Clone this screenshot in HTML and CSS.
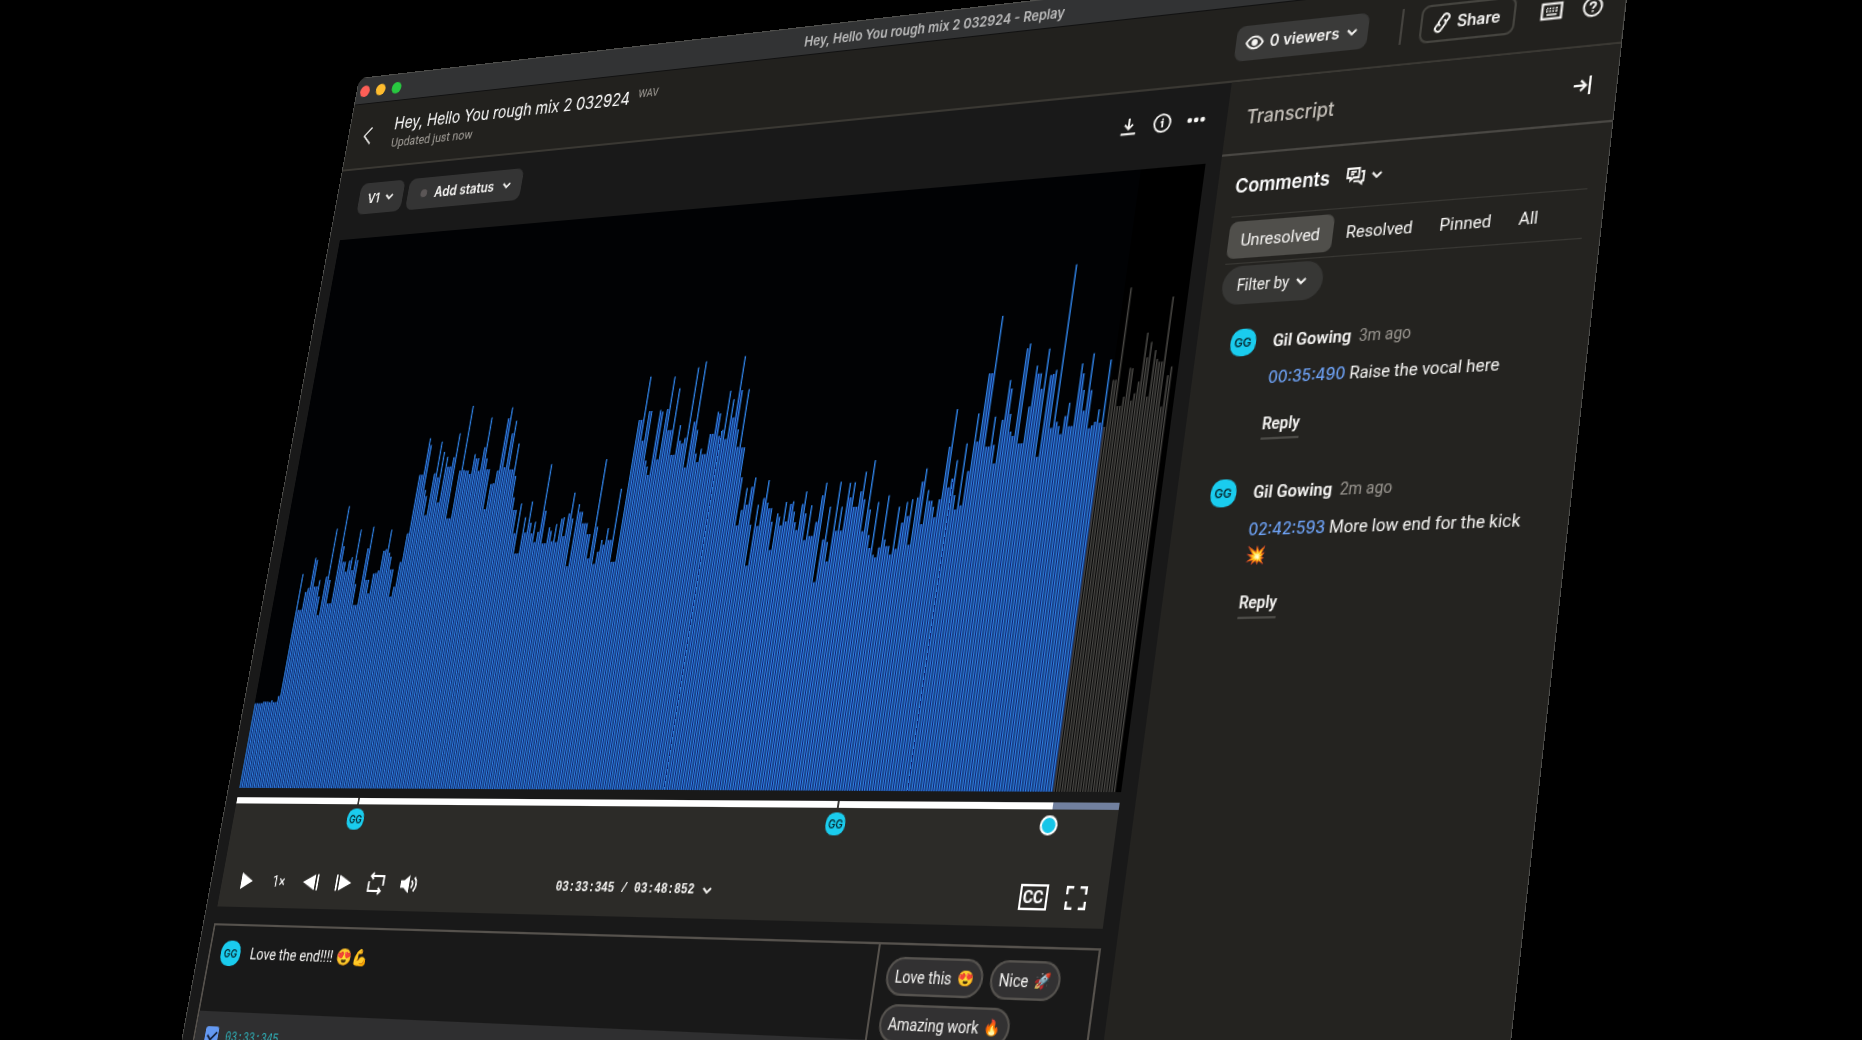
FILE: index.html
```html
<!DOCTYPE html>
<html lang="en">
<head>
<meta charset="utf-8">
<title>Hey, Hello You rough mix 2 032924 - Replay</title>
<link rel="stylesheet" href="styles.css">
</head>
<body>
<svg class="defs" aria-hidden="true">
  <symbol id="chevron" viewBox="0 0 12 12"><path d="M2 4l4 4 4-4" fill="none" stroke="currentColor" stroke-width="1.900"/></symbol>
</svg>
<div class="window">
  <div class="titlebar">
    <div class="lights"><span class="light red"></span><span class="light yellow"></span><span class="light green"></span></div>
    <span class="window-title">Hey, Hello You rough mix 2 032924 - Replay</span>
  </div>

  <header class="header">
    <button class="icon-btn back" aria-label="Back"><svg width="12" height="20" viewBox="0 0 12 20"><path d="M10.500 1.500L2 10l8.500 8.500" fill="none" stroke="currentColor" stroke-width="1.700"/></svg></button>
    <div class="file">
      <div class="file-row"><h1>Hey, Hello You rough mix 2 032924</h1><span class="format">WAV</span></div>
      <p class="updated">Updated just now</p>
    </div>
    <div class="header-actions">
      <button class="pill viewers">
        <svg width="18" height="18" viewBox="0 0 18 18"><path d="M1.200 9C3.200 5.500 5.900 3.700 9 3.700S14.800 5.500 16.800 9C14.800 12.500 12.100 14.300 9 14.300S3.200 12.500 1.200 9z" fill="none" stroke="currentColor" stroke-width="1.800"/><circle cx="9" cy="9" r="2.900" fill="currentColor"/></svg>
        0 viewers
        <svg class="chev"><use href="#chevron"/></svg>
      </button>
      <span class="rule"></span>
      <button class="share">
        <svg width="14" height="20" viewBox="0 0 14 20" fill="none" stroke="currentColor" stroke-width="1.800" stroke-linecap="round"><path d="M4.800 12.200a3 3 0 0 1-.3-4L7.700 3.400a2.900 2.900 0 0 1 4.100-.6 2.900 2.900 0 0 1 .6 4L10.800 9"/><path d="M9.200 7.800a3 3 0 0 1 .3 4l-3.200 4.800a2.900 2.900 0 0 1-4.100.6 2.900 2.900 0 0 1-.6-4L3.200 11"/></svg>
        Share
      </button>
      <button class="icon-btn" aria-label="Keyboard shortcuts"><svg width="20" height="20" viewBox="0 0 20 20"><rect x="1.500" y="3.500" width="17" height="13" fill="none" stroke="currentColor" stroke-width="2"/><path d="M5 7.600h1.500m1.200 0h1.500m1.200 0h1.500m1.200 0H15M5 10h1.500m1.200 0h1.500m1.200 0h1.500m1.200 0H15M5.500 13h9" stroke="currentColor" stroke-width="1.500"/></svg></button>
      <button class="icon-btn" aria-label="Help"><svg width="20" height="20" viewBox="0 0 20 20" fill="none" stroke="currentColor" stroke-width="1.800"><circle cx="10" cy="10" r="7.800"/><path d="M7.700 8.400c0-1.500 1-2.300 2.400-2.300s2.300.8 2.300 2c0 1.700-2.200 1.700-2.200 3.600M10.200 12.900v1.500"/></svg></button>
    </div>
  </header>

  <div class="workspace">
    <main class="main">
      <div class="toolbar">
        <button class="pill version">V1 <svg class="chev"><use href="#chevron"/></svg></button>
        <button class="pill status"><span class="status-dot"></span>Add status <svg class="chev"><use href="#chevron"/></svg></button>
        <div class="file-tools">
          <button class="icon-btn" aria-label="Download"><svg width="20" height="20" viewBox="0 0 20 20" fill="none" stroke="currentColor" stroke-width="1.900"><path d="M10 3v9.500M6 8.700L10 12.700l4-4M2.800 17.300h14.400"/></svg></button>
          <button class="icon-btn" aria-label="Info"><svg width="20" height="20" viewBox="0 0 20 20" fill="none" stroke="currentColor" stroke-width="1.800"><circle cx="10" cy="10" r="7.800"/><path d="M8.500 9h1.700v5M10.200 5.700v1.800"/></svg></button>
          <button class="icon-btn" aria-label="More"><svg width="20" height="20" viewBox="0 0 20 20" fill="currentColor"><circle cx="3.700" cy="10" r="2.300"/><circle cx="10" cy="10" r="2.300"/><circle cx="16.300" cy="10" r="2.300"/></svg></button>
        </div>
      </div>

      <div class="chart">
        <svg class="waveform" viewBox="0 0 957 547" preserveAspectRatio="none" role="img" aria-label="Waveform">
          <path id="glow" class="bars glow"/>
          <path id="played" class="bars played"/>
          <path id="unplayed" class="bars unplayed"/>
        </svg>
      </div>

      <section class="player">
        <div class="seek">
          <span class="tick" style="left:15.5%"></span>
          <span class="tick" style="left:71.1%"></span>
          <span class="avatar marker" style="left:15.5%">GG</span>
          <span class="avatar marker" style="left:71.1%">GG</span>
          <input type="range" min="0" max="228852" value="213345" aria-label="Playback position">
        </div>
        <div class="controls">
          <div class="control-group">
            <button class="icon-btn" aria-label="Play"><svg width="24" height="24" viewBox="0 0 24 24"><path d="M5 4l14 8-14 8z" fill="currentColor"/></svg></button>
            <button class="icon-btn speed">1×</button>
            <button class="icon-btn" aria-label="Step back"><svg width="24" height="24" viewBox="0 0 24 24" fill="currentColor"><path d="M17 4.500v15L2.500 12zM19 4.500h2v15h-2z"/></svg></button>
            <button class="icon-btn" aria-label="Step forward"><svg width="24" height="24" viewBox="0 0 24 24" fill="currentColor"><path d="M7 4.500v15L21.500 12zM3 4.500h2v15H3z"/></svg></button>
            <button class="icon-btn" aria-label="Loop"><svg width="24" height="24" viewBox="0 0 24 24" fill="none" stroke="currentColor" stroke-width="2"><path d="M8.500 2L5.500 5l3 3M5.500 5H20.500v9M15 22l3-3-3-3M18 19H3.500v-9"/></svg></button>
            <button class="icon-btn" aria-label="Volume"><svg width="24" height="24" viewBox="0 0 24 24"><path d="M2 8.500h4L12 3.500v17l-6-5H2z" fill="currentColor"/><path d="M14.500 8.500c1.600 2 1.600 5 0 7M17.500 5.500c3.300 3.600 3.300 9.400 0 13" fill="none" stroke="currentColor" stroke-width="1.900"/></svg></button>
          </div>
          <button class="time">03:33:345 / 03:48:852 <svg class="chev"><use href="#chevron"/></svg></button>
          <div class="control-group view-group">
            <button class="icon-btn cc" aria-label="Captions"><span>CC</span></button>
            <button class="icon-btn" aria-label="Full screen"><svg width="22" height="22" viewBox="0 0 22 22" fill="none" stroke="currentColor" stroke-width="2.200"><path d="M2.100 8V2.100H8M14 2.100h5.900V8M19.900 14v5.900H14M8 19.900H2.100V14"/></svg></button>
          </div>
        </div>
      </section>

      <section class="composer">
        <div class="draft">
          <div class="draft-text">
            <span class="avatar">GG</span>
            <input type="text" class="draft-input" aria-label="Comment" value="Love the end!!!! 😍💪">
          </div>
          <label class="draft-time"><input type="checkbox" checked><span>03:33:345</span></label>
        </div>
        <div class="suggestions">
          <button class="chip">Love this <span class="emoji">😍</span></button>
          <button class="chip">Nice <span class="emoji">🚀</span></button>
          <button class="chip">Amazing work <span class="emoji">🔥</span></button>
        </div>
      </section>
    </main>

    <aside class="sidebar">
      <div class="transcript">
        <h2>Transcript</h2>
        <button class="icon-btn" aria-label="Collapse panel"><svg width="18" height="18" viewBox="0 0 18 18" fill="none" stroke="currentColor" stroke-width="2"><path d="M1 9h10.500M7 4.500L11.500 9 7 13.500M15 1v16"/></svg></button>
      </div>
      <div class="panel">
        <div class="panel-head">
          <h2>Comments</h2>
          <button class="icon-btn kind" aria-label="Comment view">
            <svg width="20" height="20" viewBox="0 0 20 20" fill="none" stroke="currentColor" stroke-width="1.800"><path d="M2 3h10.500v8H7.500L5 13.300V11H2zM4.800 5.800H10M4.800 8.200H8M14.500 6H17v8.300h-1.500v2.400L12.500 14.300H8"/></svg>
            <svg class="chev"><use href="#chevron"/></svg>
          </button>
        </div>
        <div class="tabs" role="tablist">
          <button class="tab selected" role="tab">Unresolved</button>
          <button class="tab" role="tab">Resolved</button>
          <button class="tab" role="tab">Pinned</button>
          <button class="tab" role="tab">All</button>
        </div>
        <button class="filter">Filter by <svg class="chev"><use href="#chevron"/></svg></button>
        <article class="comment">
          <span class="avatar">GG</span>
          <div class="comment-body">
            <div class="byline"><strong>Gil Gowing</strong><span>3m ago</span></div>
            <p><a href="#t35">00:35:490</a> Raise the vocal here</p>
            <button class="reply">Reply</button>
          </div>
        </article>
        <article class="comment">
          <span class="avatar">GG</span>
          <div class="comment-body">
            <div class="byline"><strong>Gil Gowing</strong><span>2m ago</span></div>
            <p><a href="#t162">02:42:593</a> More low end for the kick 💥</p>
            <button class="reply">Reply</button>
          </div>
        </article>
      </div>
    </aside>
  </div>
</div>
<script src="waveform.js"></script>
</body>
</html>
```
FILE: styles.css
```css
* { box-sizing: border-box; margin: 0; }

body {
  min-height: 100vh;
  padding: 78px 0 0 359px;
  overflow: hidden;
  background: #000;
  color: #f7f6f4;
  font: 400 15px/22px Roboto, "Liberation Sans", sans-serif;
}

button, input { font: inherit; color: inherit; }
button { display: flex; align-items: center; border: 0; padding: 0; background: none; white-space: nowrap; }
svg { display: block; flex: none; }
.defs { display: none; }
.chev { width: 12px; height: 12px; }

/* The whole window is tilted in space */
.window {
  display: flex;
  flex-direction: column;
  width: 72vw;
  min-height: 100vh;
  overflow: hidden;
  border: 1px solid #50504d;
  border-radius: 10px 10px 0 0;
  background: #191919;
  transform-origin: 0 0;
  transform: matrix3d(0.7823, -0.09032, 0, -0.0001324, -0.17546, 0.95059, 0, -0.0000555, 0, 0, 1, 0, 0, 0, 0, 1);
}

.titlebar {
  display: grid;
  grid-template-columns: 1fr auto 1fr;
  align-items: center;
  height: 28px;
  padding: 0 4px;
  background: #323334;
  border-bottom: 1px solid #111;
}
.lights { display: flex; gap: 8px; }
.light { width: 12px; height: 12px; border-radius: 50%; }
.red { background: #fe5f57; }
.yellow { background: #febc2e; }
.green { background: #28c840; }
.window-title { font-family: Inter, sans-serif; font-size: 13px; font-weight: 600; color: #bdbdbd; }

.header {
  display: flex;
  align-items: center;
  height: 69px;
  padding: 0 18px;
  background: #22211e;
  border-bottom: 2px solid #3a3833;
}
.back { margin-right: 26px; }
.file { padding-bottom: 2px; }
.file-row { display: flex; gap: 9px; }
h1 { font-family: Inter, sans-serif; font-size: 17px; line-height: 22px; font-weight: 400; color: #fff; }
.format { font-size: 11px; line-height: 16px; color: #a5a19b; }
.updated { font-size: 13px; line-height: 18px; color: #a5a19b; }
.header-actions { display: flex; align-items: center; gap: 16px; margin-left: auto; }

.pill {
  height: 32px;
  padding: 0 12px;
  gap: 8px;
  border-radius: 8px;
  background: #343434;
  font-family: Inter, sans-serif;
  font-size: 14px;
  font-weight: 600;
}
.viewers { margin-right: 14px; padding: 0 9px; gap: 6px; background: #3a3a39; }
.rule { width: 2px; height: 32px; background: #45433f; }
.share {
  height: 34px;
  margin-right: 6px;
  padding: 0 11px;
  gap: 6px;
  border: 2px solid #45443f;
  border-radius: 8px;
  font-family: Inter, sans-serif;
  font-size: 14px;
  font-weight: 600;
}

.workspace { display: grid; grid-template-columns: 1fr 354px; flex: 1; }
.main { display: flex; flex-direction: column; padding: 0 15px 0 13px; min-width: 0; }

.toolbar { display: flex; align-items: flex-start; gap: 6px; height: 72px; padding: 15px 5px 0 15px; }
.version { padding: 0 11px; gap: 6px; font-size: 13px; }
.status { padding: 0 12px 0 16px; gap: 9px; }
.status-dot { width: 8px; height: 8px; border-radius: 50%; background: #5b5656; }
.file-tools { display: flex; align-items: center; gap: 13px; height: 32px; margin-left: auto; }

.chart { height: 547px; background: linear-gradient(90deg, #010204 93.4%, #000 93.4%); }
.waveform { width: 100%; height: 100%; }
.bars { fill: none; stroke-width: 1.5; }
.played { stroke: #2f80e2; }
.glow { stroke: #112070; stroke-width: 1; }
.unplayed { stroke: #4a4946; }

.player { margin-top: 9px; height: 105px; display: flex; flex-direction: column; background: #2c2b28; }
.seek { position: relative; height: 6px; background: linear-gradient(90deg, #fff 93.4%, #71809f 93.4%); }
.seek input {
  position: absolute;
  top: 0;
  left: -8px;
  width: calc(100% + 17px);
  height: 39px;
  margin: 0;
  appearance: none;
  background: none;
}
.seek input::-webkit-slider-thumb {
  appearance: none;
  width: 17px;
  height: 17px;
  border: 2px solid #fff;
  border-radius: 50%;
  background: #16c5e8;
}
.tick { position: absolute; top: 0; width: 2px; height: 6px; background: #3a3836; }
.avatar {
  display: grid;
  place-items: center;
  flex: none;
  width: 24px;
  height: 24px;
  border-radius: 44%;
  background: #1accee;
  color: #06272e;
  font-family: Inter, sans-serif;
  font-size: 11px;
  line-height: 12px;
  font-weight: 600;
}
.marker { position: absolute; top: 10px; width: 20px; height: 20px; margin-left: -9px; font-size: 10px; }

.controls { display: grid; grid-template-columns: 1fr auto 1fr; align-items: center; margin-top: auto; padding: 0 18px 13px 19px; }
.control-group { display: flex; align-items: center; gap: 15px; }
.view-group { justify-content: flex-end; gap: 16px; }
.controls .icon-btn { color: #fff; justify-content: center; }
.speed { width: 24px; font-size: 14px; }
.time { gap: 8px; font: bold 12px/24px "Liberation Mono", monospace; }
.cc { width: 27px; height: 22px; border: 2px solid #fff; font-size: 15px; font-weight: bold; }

.composer { display: flex; flex: 1; margin: 16px -1px 0 0; border: 2px solid #56524d; border-bottom: 0; }
.draft { display: flex; flex-direction: column; flex: 1; border-right: 2px solid #56524d; }
.draft-text { display: flex; align-items: flex-start; gap: 12px; height: 81px; padding: 14px 13px; }
.draft-input { flex: 1; min-width: 0; height: 24px; padding: 0; border: 0; background: none; }
.draft-time { display: flex; align-items: flex-start; flex: 1; gap: 9px; padding: 14px 12px; background: #2f2f30; font: 12px/20px "Liberation Mono", monospace; color: #2fb5bd; }
.draft-time input {
  appearance: none;
  display: grid;
  place-items: center;
  width: 16px;
  height: 16px;
  margin: 0;
  border-radius: 3px;
  background: #6499f2;
}
.draft-time input::before { content: ""; width: 9px; height: 5px; margin-top: -2px; border: solid #16223a; border-width: 0 0 2px 2px; transform: rotate(-45deg); }

.suggestions { display: flex; flex-wrap: wrap; align-content: flex-start; gap: 7px; width: 211px; padding: 10px; }
.chip { height: 33px; padding: 0 7px; gap: 5px; border: 2px solid #56534f; border-radius: 17px; background: #323132; font-size: 14px; }
.emoji { font-size: 13px; }

.sidebar { background: #242320; }
.transcript { display: flex; align-items: center; justify-content: space-between; height: 67px; padding: 0 20px 0 19px; border-bottom: 2px solid #494743; }
h2 { font-family: Inter, sans-serif; font-size: 17px; line-height: 22px; font-weight: 500; }
.transcript h2 { color: #c6c1ba; }
.panel { padding: 0 15px 0 17px; }
.panel-head { display: flex; align-items: center; gap: 14px; height: 55px; }
.panel-head h2 { font-weight: 600; color: #fff; }
.kind { gap: 3px; }
.tabs { display: flex; padding: 4px 0; border: solid #393834; border-width: 1px 0; }
.tab { height: 33px; padding: 0 12px; border-radius: 7px; }
.selected { background: #504f4b; }
.filter { height: 34px; margin-top: 2px; padding: 0 14px; gap: 5px; border-radius: 17px; background: #373735; font-size: 14px; }

.comment { display: flex; gap: 16px; margin-bottom: 33px; padding: 0 20px 0 15px; }
.filter + .comment { margin-top: 22px; }
.byline { display: flex; align-items: center; gap: 7px; height: 24px; margin-bottom: 9px; }
.byline strong { font-weight: 600; }
.byline span { font-size: 14px; color: #9c9892; }
.comment a { font: 500 14px/22px Inter, sans-serif; color: #6ea2f5; text-decoration: none; }
.reply { margin-top: 20px; padding-bottom: 3px; border-bottom: 2px solid #4b4a46; font-size: 14px; line-height: 18px; font-weight: 600; }
```
FILE: waveform.js
```javascript
// Peaks of the recording, as bar tips on the tilted panel: an origin, then x,y
// pairs in thirds of a pixel from it.
const peaks = [
  [230, 380, "75,970 100,965 128,961 136,966 145,948 205,655 222,582 210,690 226,636 236,624 244,618 258,533 263,540 255,620 271,600 266,650 265,705 290,590 302,600 324,446 298,670 356,379 344,498 346,545 348,575 358,542 366,532 370,570 395,449 386,540 376,612 376,675 412,505 430,440 424,470 413,600 415,640 431,580 445,572 462,512 470,508 487,449 480,518 486,530 490,568 485,650 495,620 514,546 536,460 573,284 600,175 603,195 585,330 590,348 587,405 613,280 637,185 644,216 625,292 627,367 656,230 670,232 688,160 692,170 658,260 658,415 688,272 729,78 722,140 701,270 712,272 738,222 748,235 747,272 720,282 789,112 768,202 774,235 776,268 764,387 782,312 790,310 801,272 835,115 849,82 862,122 848,160 870,190 824,262 850,268 858,288 856,352 858,390 852,460 862,520 873,370 886,412 884,458 909,364 905,428 908,460 918,425 915,486 926,455 968,252 950,392 942,490 957,442 963,452 963,484 979,432 978,486 995,416 1002,412 1003,468 1036,338 1019,400 1030,415 1014,560 1051,372 1060,395 1069,430 1077,462 1073,535 1130,237 1103,440 1092,552 1104,515 1118,480 1122,494 1137,444 1137,480 1177,326 1156,422 1150,545"],
  [600, 340, "104,310 122,240 151,110 128,302 149,213 156,213 137,362 142,380 146,405 183,210 189,215 173,358 205,207 228,110 210,270 237,145 225,257 218,345 240,255 239,302 245,310 258,294 256,382 297,82 321,64 284,245 294,270 291,340 294,366 307,326 313,342 315,366 334,282 353,215 360,220 357,288 367,270 392,152 376,297 403,178 400,232 438,48 428,150 417,268 452,147 417,320 432,322 424,412 408,556 423,510 441,444 438,494 468,412 456,440 453,554 441,677 476,494 474,558 494,474 511,420 507,488 513,505 514,545 508,630 531,520 538,530 541,556 560,486 557,544 573,492 582,484 586,515 588,546 591,570 610,492 624,454 620,520 616,600 639,496 632,588 647,546 668,466 681,428 642,727 669,598 684,606 691,500 682,664 726,425 710,572 729,500 725,572 756,428 757,472 770,427 767,500 782,454 799,395 794,478 786,574 826,360 811,508 806,585 809,624 838,486 822,644 828,652 840,622 871,466 859,598 865,618 869,644 897,500 885,626 906,548 922,486 924,528 940,478 928,614 953,472 970,425 984,385 966,552"],
  [880, 160, "150,990 155,1022 160,1040 160,1072 178,1018 208,860 232,747 217,956 205,982 232,900 223,1005 227,1048 264,850 245,1036 267,933 300,760 294,845 333,640 366,468 328,775 345,770 323,860 342,855 342,910 368,780 393,660 398,685 393,762 395,815 401,828 446,565 457,550 420,850 445,740 459,695 477,616 483,640 487,686 508,566 471,890 514,645 522,642 532,630 514,804 594,313 534,785 540,798 545,822 560,768 574,728 572,798 606,610 611,640 611,690 611,752 642,580 634,690 627,805 640,796 648,785 659,748 662,788 697,598 680,800 705,660 752,383 729,597 712,700 718,738 730,710 751,623 758,625 752,722 763,700 779,665 806,518 804,592 818,546 804,710 830,570 836,597 843,605 878,410 840,740 863,646 874,620"]
];

// Undo the tilt: position on the flat chart of a point on the tilted one.
function flatten(x, y) {
  const X = x - 359, Y = y - 78;
  const a = 0.7823 + 0.0001324 * X, b = -0.17546 + 0.0000555 * X;
  const c = -0.09032 + 0.0001324 * Y, d = 0.95059 + 0.0000555 * Y;
  const det = a * d - b * c;
  return { x: (X * d - b * Y) / det - 14, y: (a * Y - c * X) / det - 170 };
}

const tips = peaks.flatMap(([ox, oy, list]) =>
  list.split(" ").map(pair => {
    const [x, y] = pair.split(",").map(Number);
    return flatten(ox + x / 3, oy + y / 3);
  }));

// A bar takes its own tip; one without a tip takes the lower of its neighbours.
const pitch = 2.5, count = 381;
const height = [];
for (let i = 0; i < count; i++) {
  const x = i * pitch + 1;
  const own = tips.filter(t => Math.abs(t.x - x) <= pitch / 2);
  if (own.length) {
    height.push(Math.min(...own.map(t => t.y)));
  } else {
    const near = [...tips].sort((p, q) => Math.abs(p.x - x) - Math.abs(q.x - x));
    height.push(Math.max(near[0].y, near[1].y));
  }
}

let played = "", unplayed = "", glow = "";
height.forEach((y, i) => {
  const x = i * pitch + 1;
  const bar = `M${x} 547V${y.toFixed(1)}`;
  if (x >= 893) { unplayed += bar; return; }
  played += bar;
  glow += `M${x + pitch / 2} 547V${Math.max(y, height[i + 1]).toFixed(1)}`;
});
document.getElementById("played").setAttribute("d", played);
document.getElementById("unplayed").setAttribute("d", unplayed);
document.getElementById("glow").setAttribute("d", glow);
```
